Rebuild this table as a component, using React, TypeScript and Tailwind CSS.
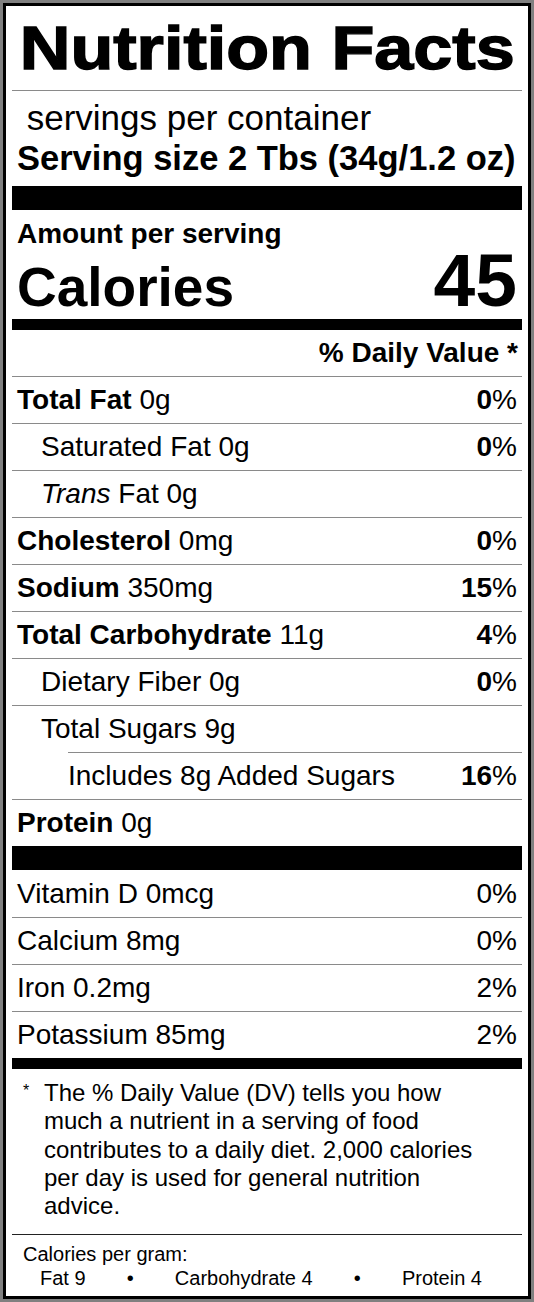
type Nutrient = {
  label: string;
  amount: string;
  bold?: boolean;
  italic?: string;
  indent?: 0 | 1 | 2;
  dv?: string;
  dvBold?: boolean;
  noBorder?: boolean;
};

const macros: Nutrient[] = [
  { label: 'Total Fat', amount: '0g', bold: true, dv: '0', dvBold: true },
  { label: 'Saturated Fat', amount: '0g', indent: 1, dv: '0', dvBold: true },
  { label: 'Fat', italic: 'Trans', amount: '0g', indent: 1 },
  { label: 'Cholesterol', amount: '0mg', bold: true, dv: '0', dvBold: true },
  { label: 'Sodium', amount: '350mg', bold: true, dv: '15', dvBold: true },
  { label: 'Total Carbohydrate', amount: '11g', bold: true, dv: '4', dvBold: true },
  { label: 'Dietary Fiber', amount: '0g', indent: 1, dv: '0', dvBold: true },
  { label: 'Total Sugars', amount: '9g', indent: 1 },
  { label: 'Includes 8g Added Sugars', amount: '', indent: 2, dv: '16', dvBold: true },
  { label: 'Protein', amount: '0g', bold: true },
];

const vitamins: Nutrient[] = [
  { label: 'Vitamin D', amount: '0mcg', dv: '0', noBorder: true },
  { label: 'Calcium', amount: '8mg', dv: '0' },
  { label: 'Iron', amount: '0.2mg', dv: '2' },
  { label: 'Potassium', amount: '85mg', dv: '2' },
];

function NutrientRow({ n }: { n: Nutrient }) {
  const indent = n.indent === 2 ? 'ml-[56px] pl-0' : n.indent === 1 ? 'pl-[29px]' : 'pl-[5px]';
  return (
    <div
      className={ `flex h-[47px] items-center justify-between pr-[5px] text-[28px] ${ indent } ${ n.noBorder ? '' : 'border-t border-[#8a8a8a]' }` }
    >
      <p>
        { n.italic && <span className="italic">{ n.italic } </span> }
        <span className={ n.bold ? 'font-bold' : '' }>{ n.label }</span>
        { n.amount && <span> { n.amount }</span> }
      </p>
      { n.dv && (
        <p>
          <span className={ n.dvBold ? 'font-bold' : '' }>{ n.dv }</span>%
        </p>
      ) }
    </div>
  );
}

export default function App() {
  return (
    <div className="bg-[#808080] p-[3px] text-black [font-family:'Liberation_Sans',Arial,sans-serif]">
      <div className="border-[3px] border-black bg-white px-[6px]">
        <div className="flex h-[84px] items-center justify-center overflow-hidden">
          <h1 className="scale-x-[1.15] text-[61px] leading-none font-bold [-webkit-text-stroke:1.4px_black]">
            Nutrition Facts
          </h1>
        </div>
        <div className="h-px bg-[#8a8a8a]"/>

        <div className="px-[5px] pt-[7px] pb-[8px]">
          <p className="text-[35px] leading-[40px] whitespace-pre"> servings per container</p>
          <p className="text-[34.5px] leading-[40px] font-bold">Serving size 2 Tbs (34g/1.2 oz)</p>
        </div>
        <div className="h-[24px] bg-black"/>

        <div className="h-[109px] px-[5px] pt-[10px]">
          <p className="text-[28px] leading-[28px] font-bold">Amount per serving</p>
          <div className="mt-[2px] flex items-baseline justify-between font-bold">
            <span className="text-[55px] leading-[60px]">Calories</span>
            <span className="text-[75px] leading-[60px]">45</span>
          </div>
        </div>
        <div className="h-[11px] bg-black"/>

        <div className="flex h-[46px] items-center justify-end pr-[4px] text-[28px] font-bold">
          % Daily Value *
        </div>
        { macros.map((n) => <NutrientRow key={ n.label } n={ n }/>) }
        <div className="h-[24px] bg-black"/>
        { vitamins.map((n) => <NutrientRow key={ n.label } n={ n }/>) }
        <div className="h-[11px] bg-black"/>

        <div className="flex pt-[10px] pb-[14px]">
          <span className="w-[32px] pl-[11px] text-[16px] leading-[24px]">*</span>
          <p className="w-[450px] text-[24px] leading-[28.25px]">
            The % Daily Value (DV) tells you how much a nutrient in a serving of food contributes to a daily
            diet. 2,000 calories per day is used for general nutrition advice.
          </p>
        </div>
        <div className="h-px bg-[#222]"/>

        <div className="h-[61px] pt-[7px] text-[20px] leading-[24px]">
          <p className="pl-[11px]">Calories per gram:</p>
          <div className="flex justify-between pr-[40px] pl-[28px]">
            <span>Fat 9</span>
            <span>•</span>
            <span>Carbohydrate 4</span>
            <span>•</span>
            <span>Protein 4</span>
          </div>
        </div>
      </div>
    </div>
  );
}
